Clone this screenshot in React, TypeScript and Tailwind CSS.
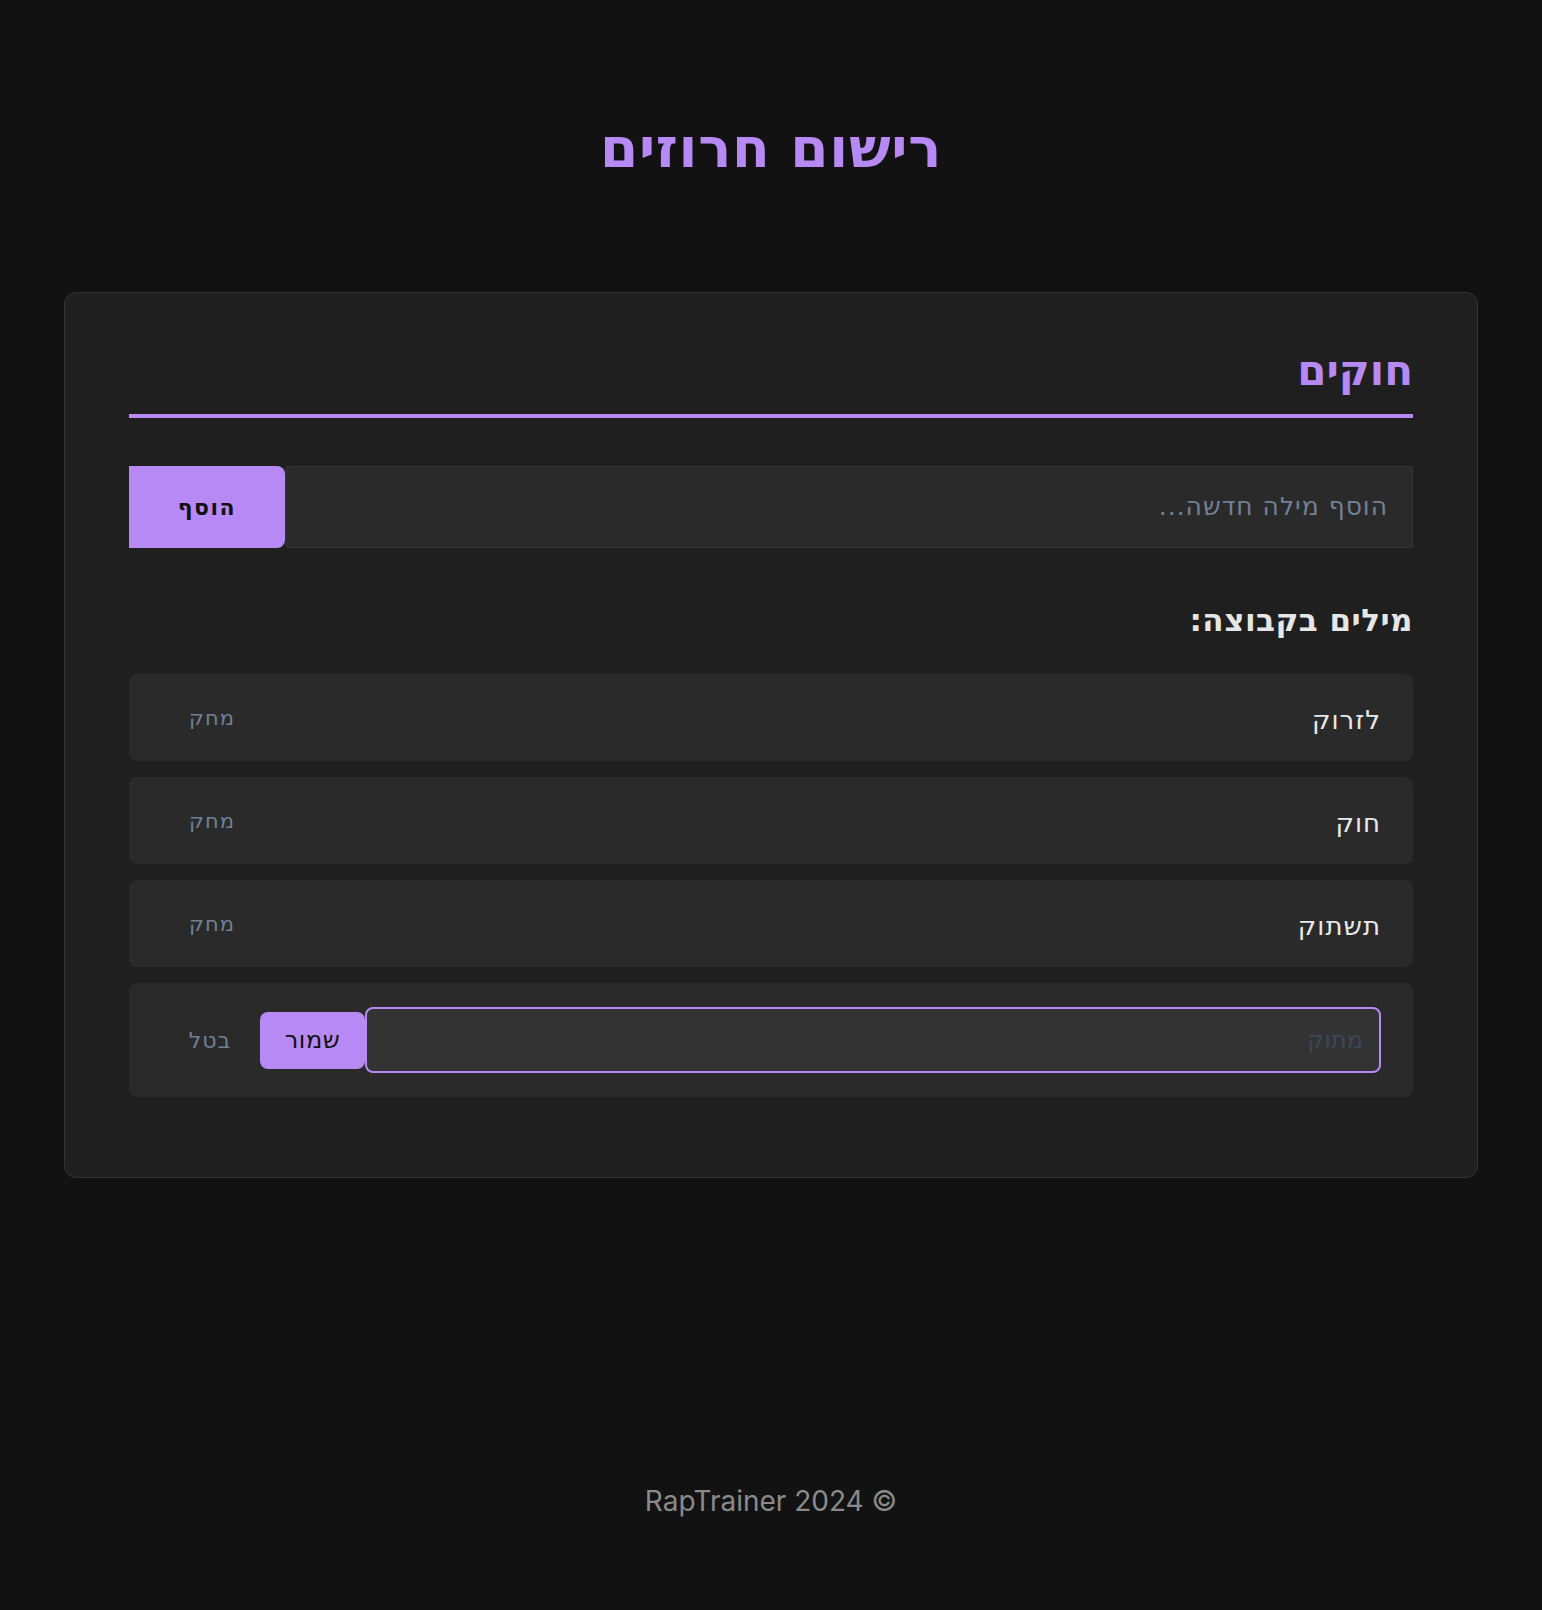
import { useState } from "react"

const words = ["לזרוק", "חוק", "תשתוק"]

const App = () => {
    const [items] = useState(words)

    return (
        <div dir="rtl" className="min-h-screen flex flex-col bg-[#121212] font-['DejaVu_Sans',sans-serif]">
            <header className="pt-[121px] text-center">
                <h1 className="text-[55px] leading-none font-bold tracking-[0.7px] text-[#b689f4]">רישום חרוזים</h1>
            </header>

            <main className="mt-[116px] px-16">
                <div className="rounded-xl border border-[#333] bg-[#1f1f1f] p-16">
                    <h2 className="-mt-[7px] border-b-4 border-[#b689f4] pb-[22px] text-[42px] leading-none font-bold text-[#b689f4]">חוקים</h2>

                    {/* add word */}
                    <div className="mt-12 flex h-[82px]">
                        <input
                            type="text"
                            placeholder="הוסף מילה חדשה..."
                            className="flex-1 rounded-l-[4px] border border-[#333] bg-[#2a2a2a] px-6 text-[25px] tracking-[1px] text-white outline-none placeholder:text-[#718096]"
                        />
                        <button className="w-[156px] rounded-r-lg bg-[#b689f4] text-[22px] font-bold tracking-[1.5px] text-[#111]">הוסף</button>
                    </div>

                    <h3 className="mt-[54px] mb-[36px] text-[31px] leading-9 font-bold tracking-[0.5px] text-[#e6e6e6]">מילים בקבוצה:</h3>

                    <ul className="space-y-4 pb-4">
                        {items.map((w) => (
                            <li key={w} className="flex h-[87px] items-center justify-between rounded-lg bg-[#2a2a2a] px-8">
                                <span className="pt-[4px] text-[26px] leading-8 tracking-[1px] text-[#e8e8e8]">{w}</span>
                                <button className="w-[102px] text-[21px] leading-7 tracking-[1px] text-[#718096]">מחק</button>
                            </li>
                        ))}
                        <li className="flex items-center rounded-lg bg-[#2a2a2a] px-8 py-6">
                            <input
                                type="text"
                                placeholder="מתוק"
                                className="h-[66px] flex-1 rounded-lg border-2 border-[#b689f4] bg-[#333] px-4 text-2xl text-white outline-none placeholder:text-[#3c4759]"
                            />
                            <button className="ml-px h-[57px] w-[105px] rounded-lg bg-[#b689f4] text-2xl tracking-[0.5px] text-[#111]">שמור</button>
                            <button className="w-[98px] text-[22px] tracking-[1px] text-[#718096]">בטל</button>
                        </li>
                    </ul>
                </div>
            </main>

            <footer className="mt-auto pb-[88px] text-center font-['Inter',sans-serif]">
                <p dir="ltr" className="text-[28px] leading-[42px] text-[#8a8a8a]">RapTrainer 2024 ©</p>
            </footer>
        </div>
    )
}

export default App
